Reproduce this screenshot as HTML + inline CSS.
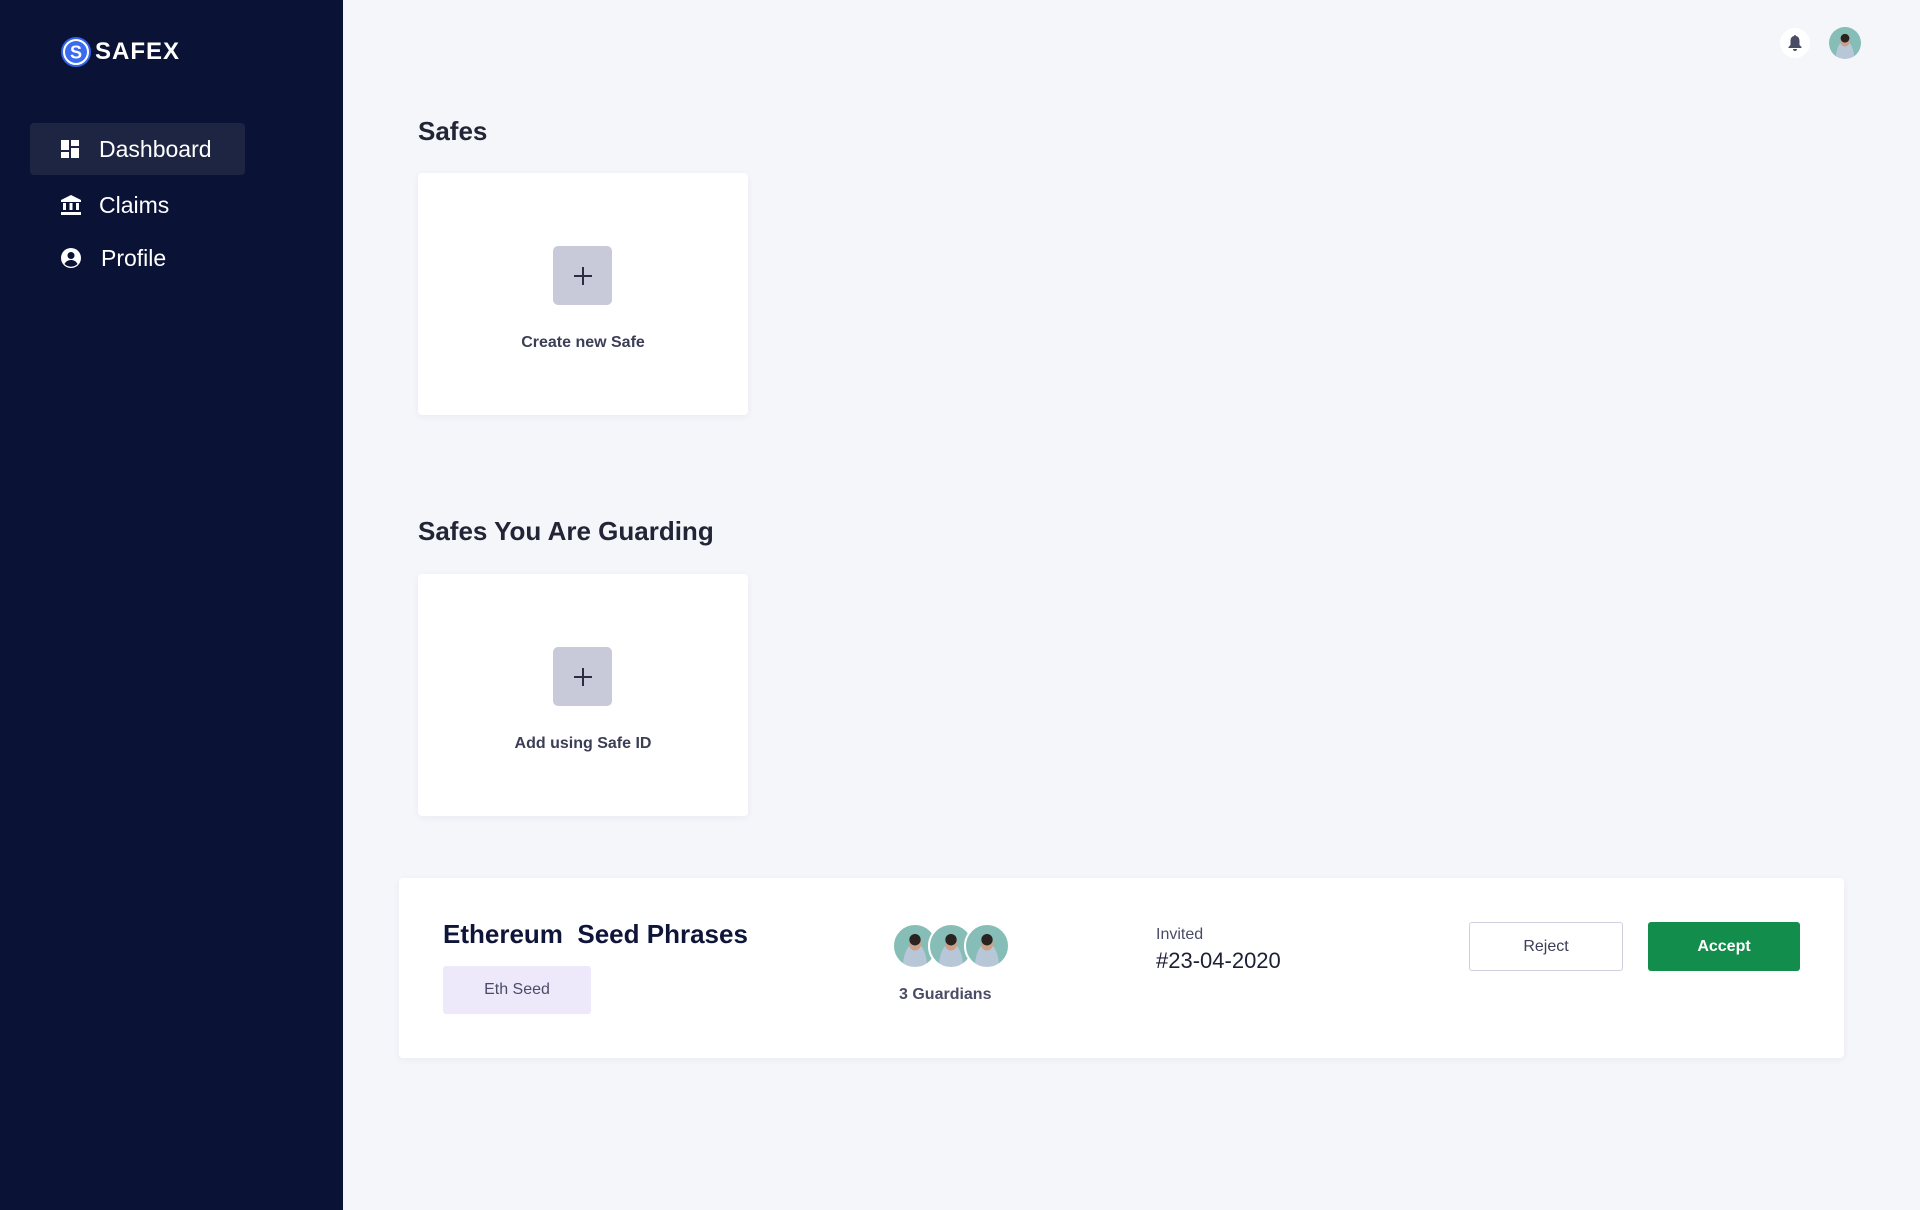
<!DOCTYPE html>
<html><head><meta charset="utf-8"><style>
*{margin:0;padding:0;box-sizing:border-box}
body{width:1920px;height:1210px;background:#f5f6fa;font-family:"Liberation Sans",sans-serif;position:relative;overflow:hidden}
.abs{position:absolute}
.side{left:0;top:0;width:343px;height:1210px;background:#0a1236}
.nav{left:30px;width:215px;height:52px;display:flex;align-items:center;color:#fff;font-size:23px;font-weight:500}
.nav svg{position:absolute;left:31px}
.nav span{position:absolute;left:69px}
.card{background:#fff;border-radius:4px;box-shadow:0 2px 8px rgba(20,30,80,.05)}
.plus{width:59px;height:59px;background:#c9cad9;border-radius:5px;display:flex;align-items:center;justify-content:center}
.h{font-size:26px;font-weight:bold;color:#222536}
.lbl{font-size:16px;color:#3b3e55;font-weight:bold;text-align:center;width:330px}
.av{width:46px;height:46px;border-radius:50%;background:radial-gradient(circle at 50% 35%,#2b2320 0 16%,transparent 17%),radial-gradient(ellipse at 50% 45%,#c9a189 0 20%,transparent 21%),radial-gradient(ellipse at 50% 100%,#b8c7d8 0 40%,transparent 41%),#86bdb6;border:2px solid #fff}
</style></head><body>
<div class="abs side"></div>
<svg class="abs" style="left:61px;top:37px" width="30" height="30" viewBox="0 0 30 30"><circle cx="15" cy="15" r="14" fill="#fff" stroke="#3564e8" stroke-width="2"/><circle cx="15" cy="15" r="11" fill="#3b6cf0"/><text x="15" y="21.5" font-size="18" font-weight="bold" fill="#fff" text-anchor="middle" font-family="Liberation Sans">S</text></svg>
<div class="abs" style="left:95px;top:38px;color:#fff;font-size:24px;font-weight:bold;letter-spacing:1px">SAFEX</div>
<div class="abs nav" style="top:123px;background:#1e2542;border-radius:4px"><svg width="18" height="18" viewBox="0 0 18 18" fill="#fff"><rect x="0" y="0" width="8" height="10"/><rect x="10" y="0" width="8" height="6"/><rect x="0" y="12" width="8" height="6"/><rect x="10" y="8" width="8" height="10"/></svg><span>Dashboard</span></div>
<div class="abs nav" style="top:179px"><svg width="20" height="20" viewBox="0 0 20 20" fill="#fff"><path d="M10 0L0 5v2h20V5z"/><rect x="2" y="8" width="3" height="7"/><rect x="8.5" y="8" width="3" height="7"/><rect x="15" y="8" width="3" height="7"/><rect x="0" y="17" width="20" height="3"/></svg><span>Claims</span></div>
<div class="abs nav" style="top:232px"><svg width="20" height="20" viewBox="0 0 20 20"><circle cx="10" cy="10" r="10" fill="#fff"/><circle cx="10" cy="7.5" r="3.5" fill="#0a1236"/><path d="M3.5 16c1.5-3 4-4 6.5-4s5 1 6.5 4a9 9 0 0 1-13 0z" fill="#0a1236"/></svg><span style="left:71px">Profile</span></div>

<div class="abs" style="left:1780px;top:28px;width:30px;height:30px;border-radius:50%;background:#fff;display:flex;align-items:center;justify-content:center"><svg width="14" height="16" viewBox="0 0 14 16" fill="#4a4c66"><path d="M7 0c.7 0 1 .5 1 1 2.5.5 3.5 2.5 3.5 5v4l2 2v1H.5v-1l2-2V6C2.5 3.5 3.5 1.5 6 1c0-.5.3-1 1-1z"/><path d="M5 14h4a2 2 0 0 1-4 0z"/></svg></div>
<div class="abs av" style="left:1829px;top:27px;width:32px;height:32px;border:none"></div>

<div class="abs h" style="left:418px;top:116px">Safes</div>
<div class="abs card" style="left:418px;top:173px;width:330px;height:242px"></div>
<div class="abs plus" style="left:553px;top:246px"><svg width="20" height="20"><path d="M10 1v18M1 10h18" stroke="#2b2d40" stroke-width="2"/></svg></div>
<div class="abs lbl" style="left:418px;top:334px">Create new Safe</div>

<div class="abs h" style="left:418px;top:516px">Safes You Are Guarding</div>
<div class="abs card" style="left:418px;top:574px;width:330px;height:242px"></div>
<div class="abs plus" style="left:553px;top:647px"><svg width="20" height="20"><path d="M10 1v18M1 10h18" stroke="#2b2d40" stroke-width="2"/></svg></div>
<div class="abs lbl" style="left:418px;top:735px">Add using Safe ID</div>

<div class="abs card" style="left:399px;top:878px;width:1445px;height:180px"></div>
<div class="abs" style="left:443px;top:919px;font-size:26px;font-weight:bold;color:#0f1538;white-space:pre">Ethereum  Seed Phrases</div>
<div class="abs" style="left:443px;top:966px;width:148px;height:48px;background:#ede9fb;border-radius:3px;color:#4a4c66;font-size:16px;display:flex;align-items:center;justify-content:center">Eth Seed</div>
<div class="abs av" style="left:892px;top:923px"></div>
<div class="abs av" style="left:928px;top:923px"></div>
<div class="abs av" style="left:964px;top:923px"></div>
<div class="abs" style="left:899px;top:986px;font-size:16px;font-weight:bold;color:#4a4c66">3 Guardians</div>
<div class="abs" style="left:1156px;top:926px;font-size:16px;color:#4a4c66">Invited</div>
<div class="abs" style="left:1156px;top:948px;font-size:22px;color:#1c1f35">#23-04-2020</div>
<div class="abs" style="left:1469px;top:922px;width:154px;height:49px;border:1px solid #cfd0de;border-radius:3px;background:#fff;color:#3b3e55;font-size:16px;display:flex;align-items:center;justify-content:center">Reject</div>
<div class="abs" style="left:1648px;top:922px;width:152px;height:49px;border-radius:3px;background:#138d4b;color:#fff;font-size:16px;font-weight:bold;display:flex;align-items:center;justify-content:center">Accept</div>
</body></html>
